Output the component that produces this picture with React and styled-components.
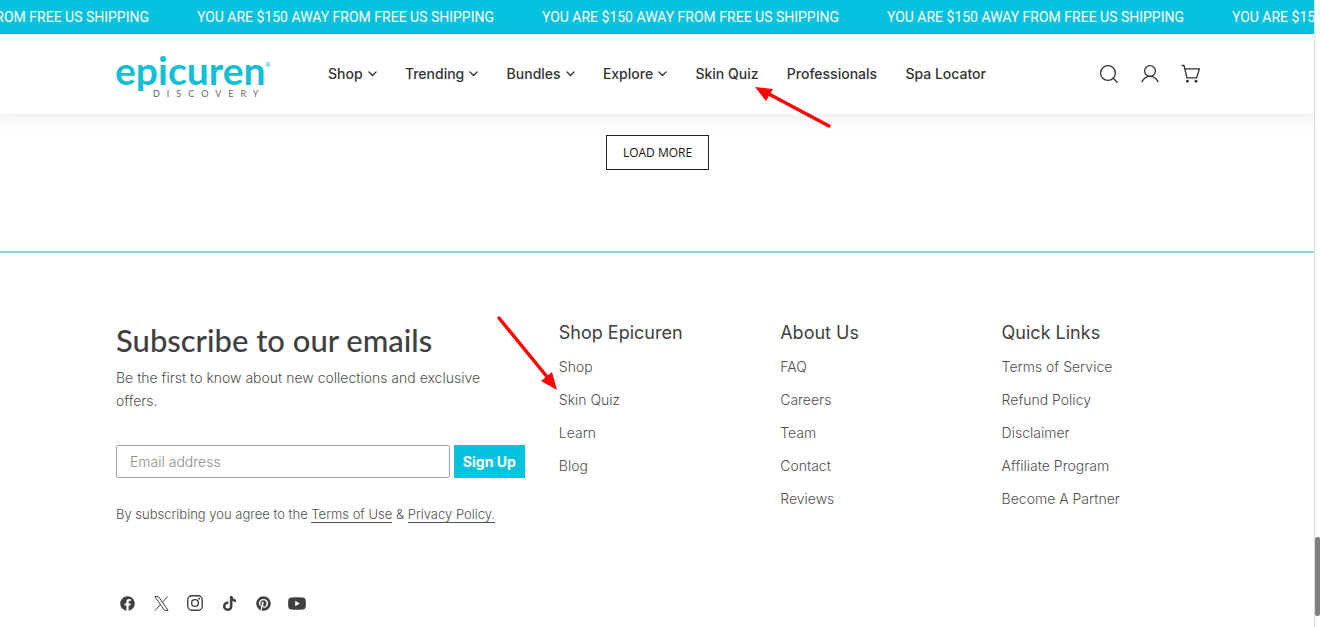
import React, { useState } from "react";
import styled, { createGlobalStyle } from "styled-components";
import { FaFacebook, FaPinterest, FaTiktok } from "react-icons/fa";

const GlobalStyle = createGlobalStyle`
  * {
    box-sizing: border-box;
  }
  body {
    margin: 0;
    background: #ffffff;
    color: #404040;
    font-family: Inter, "Open Sans", sans-serif;
    font-size: 14px;
  }
  a {
    color: inherit;
    text-decoration: none;
  }
  ul {
    margin: 0;
    padding: 0;
    list-style: none;
  }
`;

const Page = styled.div`
  position: relative;
  min-height: 100vh;
  padding-right: 5px;
  overflow: hidden;
`;
const Announcement = styled.div`
  height: 34px;
  overflow: hidden;
  background: #06c2df;
`;
const AnnouncementTrack = styled.div`
  display: flex;
  width: max-content;
  margin-left: -172px;
`;
const AnnouncementItem = styled.span`
  width: 345px;
  text-align: center;
  color: #ffffff;
  font-family: Roboto, sans-serif;
  font-size: 14px;
  font-weight: 400;
  line-height: 34px;
  white-space: nowrap;
`;

const Header = styled.header`
  position: relative;
  display: flex;
  align-items: center;
  height: 80px;
  padding: 0 112px 0 116px;
  background: #ffffff;
  box-shadow: 0 4px 16px rgba(0, 0, 0, 0.08);
`;
const Logo = styled.a`
  display: block;
  width: 156px;
  flex: none;
`;
const LogoArt = styled.svg`
  display: block;
  overflow: visible;
`;
const Nav = styled.nav`
  display: flex;
  flex: 0 1 658px;
  justify-content: space-between;
  margin-left: 56px;
`;
const NavLink = styled.a`
  display: flex;
  align-items: center;
  gap: 5px;
  color: #333333;
  font-size: 14px;
  font-weight: 500;
  line-height: 24px;
  white-space: nowrap;
`;
const HeaderActions = styled.div`
  display: flex;
  gap: 17px;
  margin-left: auto;
`;
const IconButton = styled.button`
  display: flex;
  align-items: center;
  justify-content: center;
  width: 24px;
  height: 24px;
  padding: 0;
  border: 0;
  background: none;
  color: #333333;
  cursor: pointer;
`;

const Main = styled.main`
  display: flex;
  justify-content: center;
  padding: 21px 0 81px;
`;
const LoadMore = styled.button`
  height: 35px;
  padding: 0 16px;
  border: 1px solid #222222;
  background: #ffffff;
  color: #111111;
  font-family: "Open Sans", sans-serif;
  font-size: 12px;
  line-height: 16px;
  cursor: pointer;
`;

const Footer = styled.footer`
  padding: 67px 116px 12px;
  border-top: 2px solid #7fd9e4;
`;
const FooterGrid = styled.div`
  display: grid;
  grid-template-columns: repeat(5, 1fr);
  column-gap: 24px;
`;
const Subscribe = styled.section`
  grid-column: span 2;
  padding-right: 10px;
`;
const SubscribeTitle = styled.h2`
  margin: 0 0 6px;
  font-family: Lato, sans-serif;
  font-size: 31px;
  font-weight: 500;
  line-height: 40px;
`;
const SubscribeText = styled.p`
  margin: 0 0 33px;
  color: #505050;
  font-size: 14px;
  font-weight: 300;
  line-height: 23px;
`;
const Form = styled.form`
  display: flex;
  gap: 4px;
`;
const EmailInput = styled.input`
  flex: 1;
  min-width: 0;
  height: 33px;
  padding: 0 13px;
  border: 1px solid #a3a3a3;
  border-radius: 2px;
  font-family: Inter, sans-serif;
  font-size: 14px;
  font-weight: 300;
  color: #404040;
  &::placeholder {
    color: #8c8c8c;
  }
`;
const SignUp = styled.button`
  width: 71px;
  height: 33px;
  padding: 0;
  border: 0;
  background: #06c2df;
  color: #ffffff;
  font-family: Inter, sans-serif;
  font-size: 14px;
  font-weight: 700;
  cursor: pointer;
`;
const Consent = styled.p`
  margin: 24px 0 0;
  color: #505050;
  font-size: 13px;
  font-weight: 300;
  line-height: 24px;
  a {
    border-bottom: 1px solid #505050;
  }
`;
const ColumnTitle = styled.h3`
  margin: 0 0 9px;
  font-size: 18px;
  font-weight: 400;
  line-height: 26px;
`;
const LinkList = styled.ul`
  display: flex;
  flex-direction: column;
  gap: 9px;
  color: #505050;
  font-size: 14px;
  font-weight: 300;
  line-height: 24px;
`;
const Socials = styled.ul`
  display: flex;
  gap: 12px;
  margin-top: 65px;
`;
const SocialLink = styled.a`
  display: flex;
  align-items: center;
  justify-content: center;
  width: 22px;
  height: 24px;
`;

const Arrow = styled.svg`
  position: absolute;
  left: ${({ $left }) => $left}px;
  top: ${({ $top }) => $top}px;
  pointer-events: none;
`;
const ScrollTrack = styled.div`
  position: fixed;
  top: 0;
  right: 0;
  bottom: 0;
  width: 6px;
  padding-top: 537px;
  background: #ffffff;
  border-left: 1px solid #dddddd;
`;
const ScrollThumb = styled.div`
  height: 79px;
  border-radius: 2px;
  background: #808080;
`;

const navItems = [
  { label: "Shop", menu: true },
  { label: "Trending", menu: true },
  { label: "Bundles", menu: true },
  { label: "Explore", menu: true },
  { label: "Skin Quiz" },
  { label: "Professionals" },
  { label: "Spa Locator" },
];

const columns = [
  { title: "Shop Epicuren", links: ["Shop", "Skin Quiz", "Learn", "Blog"] },
  { title: "About Us", links: ["FAQ", "Careers", "Team", "Contact", "Reviews"] },
  {
    title: "Quick Links",
    links: [
      "Terms of Service",
      "Refund Policy",
      "Disclaimer",
      "Affiliate Program",
      "Become A Partner",
    ],
  },
];

const Chevron = () => (
  <svg width="9" height="6" viewBox="0 0 9 6" fill="none" stroke="currentColor" strokeWidth="1.3">
    <path d="M1 1l3.5 3.5L8 1" strokeLinecap="round" />
  </svg>
);

const SearchIcon = () => (
  <svg width="20" height="20" viewBox="0 0 20 20" fill="none" stroke="currentColor" strokeWidth="1.3">
    <circle cx="9" cy="9" r="7.4" />
    <path d="M14.2 14.2l4 4" strokeLinecap="round" />
  </svg>
);

const AccountIcon = () => (
  <svg width="20" height="20" viewBox="0 0 20 20" fill="none" stroke="currentColor" strokeWidth="1.3">
    <circle cx="10" cy="7" r="5.4" />
    <path d="M2 17.6c1.6-3 4.4-5.2 8-5.2s6.4 2.2 8 5.2" strokeLinecap="round" />
  </svg>
);

const CartIcon = () => (
  <svg width="20" height="20" viewBox="0 0 20 20" fill="none" stroke="currentColor" strokeWidth="1.3">
    <path d="M0.5 1.5h2.5L6 13.8h9.7L18.4 4.8H3.8" strokeLinejoin="round" />
    <circle cx="6.4" cy="17.2" r="1.4" fill="currentColor" stroke="none" />
    <circle cx="15" cy="17.2" r="1.4" fill="currentColor" stroke="none" />
  </svg>
);

const XIcon = () => (
  <svg width="15" height="15" viewBox="0 0 15 15" fill="none" stroke="currentColor">
    <path d="M0.9 0.6h3.6l9.6 13.8h-3.6z" />
    <path d="M13.6 0.5L8.3 6.5M6.5 8.5L1 14.5" />
  </svg>
);

const InstagramIcon = () => (
  <svg width="16" height="16" viewBox="0 0 16 16" fill="none" stroke="currentColor" strokeWidth="1.4">
    <rect x="0.8" y="0.8" width="14.4" height="14.4" rx="4" />
    <circle cx="8" cy="8" r="3.4" />
    <circle cx="12.2" cy="3.8" r="1" fill="currentColor" stroke="none" />
  </svg>
);

const YoutubeIcon = () => (
  <svg width="18" height="13" viewBox="0 0 18 13">
    <path
      fill="currentColor"
      fillRule="evenodd"
      d="M3 0.5Q9-0.2 15 0.5Q17.5 0.7 17.7 3Q18.1 6.5 17.7 10Q17.5 12.3 15 12.5Q9 13.2 3 12.5Q0.5 12.3 0.3 10Q-0.1 6.5 0.3 3Q0.5 0.7 3 0.5ZM7.2 3.8V9.2L11.8 6.5Z"
    />
  </svg>
);

const socials = [
  { name: "Facebook", icon: <FaFacebook size={15} /> },
  { name: "X", icon: <XIcon /> },
  { name: "Instagram", icon: <InstagramIcon /> },
  { name: "TikTok", icon: <FaTiktok size={15} /> },
  { name: "Pinterest", icon: <FaPinterest size={15} /> },
  { name: "YouTube", icon: <YoutubeIcon /> },
];

const App = () => {
  const [email, setEmail] = useState("");

  return (
    <Page>
      <GlobalStyle />
      <Announcement>
        <AnnouncementTrack>
          {[0, 1, 2, 3, 4].map((i) => (
            <AnnouncementItem key={i}>YOU ARE $150 AWAY FROM FREE US SHIPPING</AnnouncementItem>
          ))}
        </AnnouncementTrack>
      </Announcement>

      <Header>
        <Logo href="#" aria-label="Epicuren Discovery">
          <LogoArt width="156" height="48" viewBox="0 0 156 48">
            <text x="-1" y="35" fill="#12bfd6" fontFamily="Lato, sans-serif" fontSize="39" fontWeight="700">
              epicuren
            </text>
            <text x="149" y="18" fill="#12bfd6" fontFamily="Inter, sans-serif" fontSize="8">
              ®
            </text>
            <text x="37" y="47" fill="#666666" fontFamily="Lato, sans-serif" fontSize="9" letterSpacing="7">
              DISCOVERY
            </text>
          </LogoArt>
        </Logo>
        <Nav>
          {navItems.map((item) => (
            <NavLink key={item.label} href="#">
              {item.label}
              {item.menu && <Chevron />}
            </NavLink>
          ))}
        </Nav>
        <HeaderActions>
          <IconButton aria-label="Search">
            <SearchIcon />
          </IconButton>
          <IconButton aria-label="Account">
            <AccountIcon />
          </IconButton>
          <IconButton aria-label="Cart">
            <CartIcon />
          </IconButton>
        </HeaderActions>
      </Header>

      <Main>
        <LoadMore>LOAD MORE</LoadMore>
      </Main>

      <Footer>
        <FooterGrid>
          <Subscribe>
            <SubscribeTitle>Subscribe to our emails</SubscribeTitle>
            <SubscribeText>
              Be the first to know about new collections and exclusive offers.
            </SubscribeText>
            <Form onSubmit={(e) => e.preventDefault()}>
              <EmailInput
                type="email"
                aria-label="Email address"
                placeholder="Email address"
                value={email}
                onChange={(e) => setEmail(e.target.value)}
              />
              <SignUp type="submit">Sign Up</SignUp>
            </Form>
            <Consent>
              By subscribing you agree to the <a href="#">Terms of Use</a> &amp;{" "}
              <a href="#">Privacy Policy.</a>
            </Consent>
          </Subscribe>
          {columns.map((column) => (
            <section key={column.title}>
              <ColumnTitle>{column.title}</ColumnTitle>
              <LinkList>
                {column.links.map((link) => (
                  <li key={link}>
                    <a href="#">{link}</a>
                  </li>
                ))}
              </LinkList>
            </section>
          ))}
        </FooterGrid>
        <Socials>
          {socials.map((social) => (
            <li key={social.name}>
              <SocialLink href="#" aria-label={social.name}>
                {social.icon}
              </SocialLink>
            </li>
          ))}
        </Socials>
      </Footer>

      <Arrow $left={755} $top={87} width="78" height="42" viewBox="0 0 78 42">
        <path d="M12 6L74 39" stroke="#fb0505" strokeWidth="3.5" strokeLinecap="round" />
        <path d="M0 0L18 2L11 14Z" fill="#fb0505" />
      </Arrow>
      <Arrow $left={496} $top={316} width="64" height="76" viewBox="0 0 64 76">
        <path d="M3 2L52 62" stroke="#fb0505" strokeWidth="3.5" strokeLinecap="round" />
        <path d="M61 74L45 65L56 56Z" fill="#fb0505" />
      </Arrow>

      <ScrollTrack>
        <ScrollThumb />
      </ScrollTrack>
    </Page>
  );
};

export default App;
